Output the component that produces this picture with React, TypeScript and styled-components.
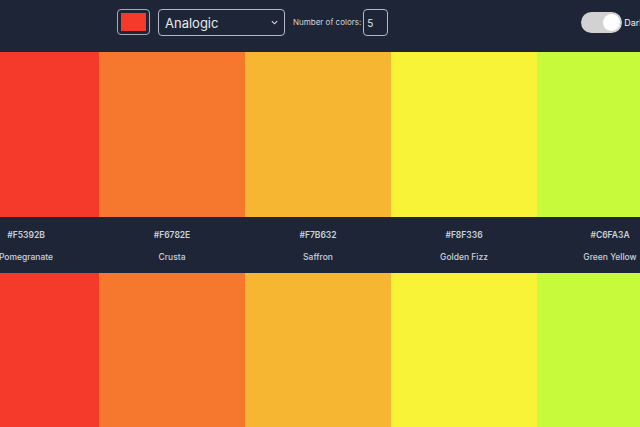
import React from "react";
import styled, { createGlobalStyle } from "styled-components";

const Global = createGlobalStyle`
  html, body { margin: 0; padding: 0; background: #1e2536; overflow: hidden; }
  body { font-family: Inter, "Noto Sans", "Liberation Sans", sans-serif; }
`;

const Viewport = styled.div`
  width: 640px;
  height: 427px;
  overflow: hidden;
`;

const Page = styled.div`
  width: 730px;
  margin-left: -47px;
  display: flex;
  flex-direction: column;
  height: 427px;
`;

const Header = styled.header`
  height: 52px;
  background: #1e2536;
  display: flex;
  align-items: flex-start;
  padding: 9px 0 0 164px;
  box-sizing: border-box;
  gap: 8px;
`;

const SwatchButton = styled.div`
  width: 33px;
  height: 26px;
  box-sizing: border-box;
  border: 1.5px solid #a7acb6;
  border-radius: 4px;
  display: flex;
  align-items: center;
  justify-content: center;
`;

const SwatchFill = styled.div<{ $c: string }>`
  width: 25px;
  height: 18px;
  background: ${(p) => p.$c};
`;

const Select = styled.div`
  width: 127px;
  height: 27px;
  box-sizing: border-box;
  border: 1.5px solid #b3b8c2;
  border-radius: 4px;
  display: flex;
  align-items: center;
  justify-content: space-between;
  padding: 0 5px 0 6px;
  color: #e8eaee;
  font-size: 13px;
`;

const Label = styled.span`
  color: #d3d6dc;
  font-size: 8px;
  line-height: 27px;
`;

const NumberBox = styled.div`
  width: 25px;
  height: 27px;
  box-sizing: border-box;
  border: 1.5px solid #b3b8c2;
  border-radius: 4px;
  color: #e8eaee;
  font-size: 10px;
  display: flex;
  align-items: center;
  padding-left: 3px;
  margin-left: -6px;
`;

const ToggleGroup = styled.div`
  margin-left: auto;
  display: flex;
  align-items: center;
  height: 27px;
  gap: 2px;
  padding-right: 12px;
  color: #f1f2f4;
  font-size: 9px;
`;

const Track = styled.div`
  width: 41px;
  height: 21px;
  border-radius: 11px;
  background: #d2d2d2;
  display: flex;
  align-items: center;
  justify-content: flex-end;
  padding: 0 2px;
  box-sizing: border-box;
`;

const Knob = styled.div`
  width: 17px;
  height: 17px;
  border-radius: 50%;
  background: #ffffff;
`;

const Band = styled.div<{ $h?: number }>`
  display: grid;
  grid-template-columns: repeat(5, 1fr);
  ${(p) => (p.$h ? `height: ${p.$h}px;` : "flex: 1;")}
`;

const ColorCell = styled.div<{ $c: string }>`
  background: ${(p) => p.$c};
`;

const Strip = styled.div`
  height: 56px;
  background: #1e2536;
  display: grid;
  grid-template-columns: repeat(5, 1fr);
`;

const InfoCell = styled.div`
  display: flex;
  flex-direction: column;
  align-items: center;
  padding-top: 12px;
  gap: 10px;
  color: #cdd1d8;
  font-size: 8.5px;
`;

const Hex = styled.span`
  font-weight: 600;
  line-height: 12px;
`;

const Name = styled.span`
  font-weight: 500;
  line-height: 12px;
`;

const colors = [
  { hex: "#F5392B", name: "Pomegranate" },
  { hex: "#F6782E", name: "Crusta" },
  { hex: "#F7B632", name: "Saffron" },
  { hex: "#F8F336", name: "Golden Fizz" },
  { hex: "#C6FA3A", name: "Green Yellow" },
];

export default function App() {
  return (
    <Viewport>
      <Global />
      <Page>
        <Header>
          <SwatchButton>
            <SwatchFill $c="#F5392B" />
          </SwatchButton>
          <Select>
            <span>Analogic</span>
            <svg width="9" height="9" viewBox="0 0 10 10">
              <path d="M2 3.5 L5 6.5 L8 3.5" fill="none" stroke="#d8dbe0" strokeWidth="1.2" />
            </svg>
          </Select>
          <Label>Number of colors:</Label>
          <NumberBox>5</NumberBox>
          <ToggleGroup>
            <Track>
              <Knob />
            </Track>
            <span>Dark Mode</span>
          </ToggleGroup>
        </Header>
        <Band $h={165}>
          {colors.map((c) => (
            <ColorCell key={c.hex} $c={c.hex} />
          ))}
        </Band>
        <Strip>
          {colors.map((c) => (
            <InfoCell key={c.hex}>
              <Hex>{c.hex}</Hex>
              <Name>{c.name}</Name>
            </InfoCell>
          ))}
        </Strip>
        <Band>
          {colors.map((c) => (
            <ColorCell key={c.hex} $c={c.hex} />
          ))}
        </Band>
      </Page>
    </Viewport>
  );
}
